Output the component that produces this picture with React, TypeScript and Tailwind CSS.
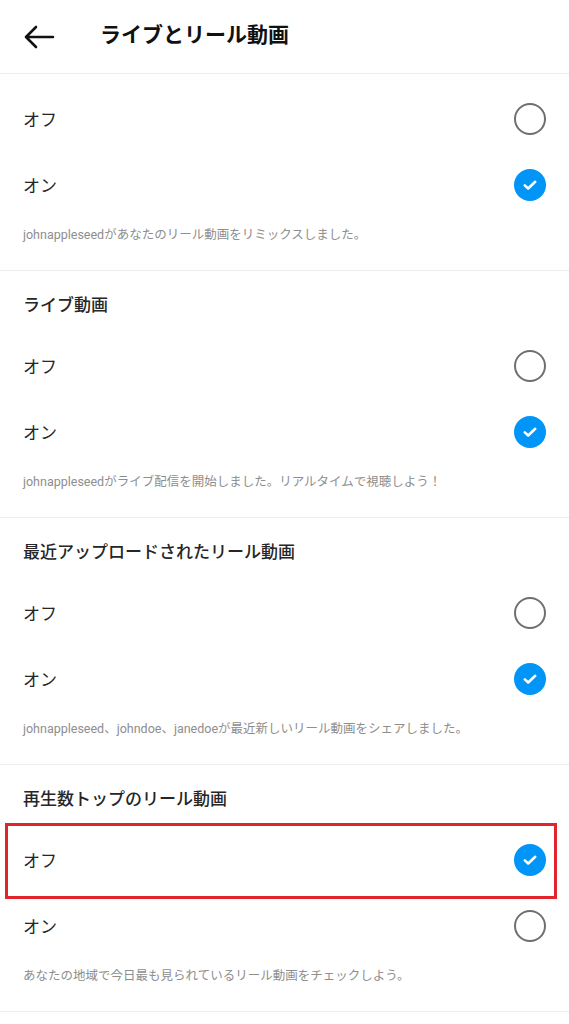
import React from 'react';

const font = { fontFamily: 'Roboto, "Noto Sans CJK JP", sans-serif' };

function Radio({ checked }: { checked: boolean }) {
  if (checked) {
    return (
      <span className="flex h-[32px] w-[32px] items-center justify-center rounded-full bg-[#0095f6]">
        <svg width="16" height="16" viewBox="0 0 16 16" fill="none">
          <path d="M2.8 8.4l3.4 3.1L13.2 4.8" stroke="#fff" strokeWidth="2.6" strokeLinecap="round" strokeLinejoin="round" />
        </svg>
      </span>
    );
  }
  return <span className="block h-[32px] w-[32px] rounded-full border-[2.5px] border-[#6f6f6f]" />;
}

function Row({ label, checked, highlight }: { label: string; checked: boolean; highlight?: boolean }) {
  return (
    <div className="relative flex h-[66px] items-center justify-between pl-[23px] pr-[23px]">
      <span className="pt-[3px] text-[17px] text-[#262626]">{label}</span>
      <Radio checked={checked} />
      {highlight && (
        <span className="pointer-events-none absolute left-[5px] right-[12px] top-[-4px] bottom-[-6px] border-[3px] border-[#e0252d]" />
      )}
    </div>
  );
}

interface Section {
  title?: string;
  on: boolean;
  desc: string;
  highlightOff?: boolean;
}

const sections: Section[] = [
  { on: true, desc: 'johnappleseedがあなたのリール動画をリミックスしました。' },
  { title: 'ライブ動画', on: true, desc: 'johnappleseedがライブ配信を開始しました。リアルタイムで視聴しよう！' },
  { title: '最近アップロードされたリール動画', on: true, desc: 'johnappleseed、johndoe、janedoeが最近新しいリール動画をシェアしました。' },
  { title: '再生数トップのリール動画', on: false, desc: 'あなたの地域で今日最も見られているリール動画をチェックしよう。', highlightOff: true },
];

export default function App() {
  return (
    <div className="min-h-[1024px] w-[569px] overflow-hidden bg-white" style={font}>
      <header className="flex h-[74px] items-center border-b border-[#ececec]">
        <div className="flex w-[100px] items-center pl-[23px]">
          <svg width="32" height="24" viewBox="0 0 32 24" fill="none">
            <path d="M30 12H3M13 2L3 12l10 10" stroke="#111" strokeWidth="2.6" strokeLinecap="round" strokeLinejoin="round" />
          </svg>
        </div>
        <h1 className="pb-[2px] text-[21px] font-bold text-[#111]">ライブとリール動画</h1>
      </header>
      {sections.map((s, i) => (
        <section key={i} className={`border-b border-[#ececec] ${s.title ? '' : 'pt-[12px]'}`}>
          {s.title && (
            <div className="h-[62px] pl-[23px] pt-[22px]">
              <h2 className="text-[17px] font-medium leading-[24px] text-[#262626]">{s.title}</h2>
            </div>
          )}
          <Row label="オフ" checked={!s.on} highlight={s.highlightOff} />
          <Row label="オン" checked={s.on} />
          <p className="pl-[23px] pt-[8px] pb-[26px] text-[12.5px] leading-[18px] text-[#8e8e8e]">{s.desc}</p>
        </section>
      ))}
    </div>
  );
}
